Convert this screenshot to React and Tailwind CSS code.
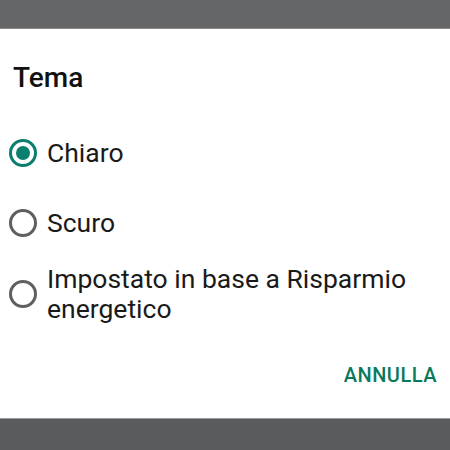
import React, { useState } from 'react';

const options = [
  { id: 'light', label: 'Chiaro' },
  { id: 'dark', label: 'Scuro' },
  { id: 'battery', label: 'Impostato in base a Risparmio energetico' },
];

const Radio = ({ checked }) => (
  <span
    className={`w-[28px] h-[28px] shrink-0 rounded-full border-[3px] flex items-center justify-center ${
      checked ? 'border-[#0b7f6e]' : 'border-[#5f5f5f]'
    }`}
  >
    {checked && <span className="w-[14px] h-[14px] rounded-full bg-[#0b7f6e]" />}
  </span>
);

const App = () => {
  const [theme, setTheme] = useState('light');

  return (
    <div className="w-[450px] h-[450px] flex flex-col bg-[#606163] font-['Roboto',sans-serif] overflow-hidden">
      <div className="h-[29px] bg-[#656668] border-b border-[#88898b]" />
      <div className="h-[389px] bg-white flex flex-col">
        <h1 className="pl-[13px] pt-[31px] text-[28px] leading-[36px] font-medium text-[#111]">Tema</h1>
        <div className="mt-[42px] flex flex-col">
          {options.map((opt, i) => (
            <button
              key={opt.id}
              onClick={() => setTheme(opt.id)}
              className={`flex items-center gap-[10px] pl-[9px] pr-[30px] text-left ${
                i === 1 ? 'mt-[40px]' : i === 2 ? 'mt-[26px]' : ''
              }`}
            >
              <Radio checked={theme === opt.id} />
              <span className="text-[26.5px] leading-[30px] text-[#1a1a1a]">{opt.label}</span>
            </button>
          ))}
        </div>
        <div className="flex justify-end pr-[13px] mt-auto mb-[31px]">
          <button className="text-[20px] leading-[24px] font-medium tracking-[0.5px] text-[#087a5b]">ANNULLA</button>
        </div>
      </div>
      <div className="flex-1 bg-[#5a5b5d] border-t border-[#9a9b9d]" />
    </div>
  );
};

export default App;
